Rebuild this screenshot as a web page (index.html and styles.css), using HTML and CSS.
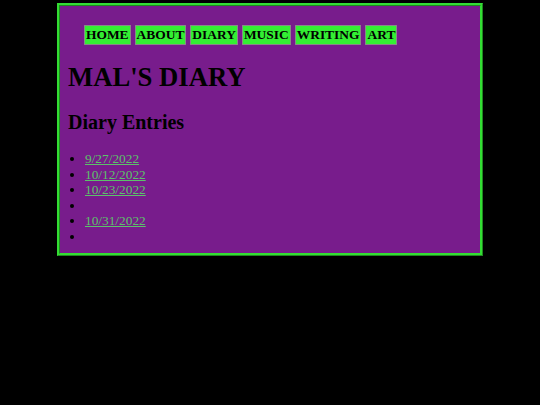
FILE: index.html
```html
<!DOCTYPE html>
<html>
<head>
<meta charset="utf-8">
<title>Mal's Diary</title>
<link rel="stylesheet" href="styles.css">
</head>
<body>
<div class="page">
  <nav class="nav">
    <a class="nav-item" href="#">HOME</a>
    <a class="nav-item" href="#">ABOUT</a>
    <a class="nav-item" href="#">DIARY</a>
    <a class="nav-item" href="#">MUSIC</a>
    <a class="nav-item" href="#">WRITING</a>
    <a class="nav-item" href="#">ART</a>
  </nav>
  <h1 class="title">MAL'S DIARY</h1>
  <h2 class="subtitle">Diary Entries</h2>
  <ul class="entries">
    <li><a href="#">9/27/2022</a></li>
    <li><a href="#">10/12/2022</a></li>
    <li><a href="#">10/23/2022</a></li>
    <li></li>
    <li><a href="#">10/31/2022</a></li>
    <li></li>
  </ul>
</div>
</body>
</html>
```
FILE: styles.css
```css
html, body {
  margin: 0;
  padding: 0;
  background: #000;
}
body {
  font-family: "Liberation Serif", "Times New Roman", serif;
  font-size: 13.33px;
  color: #000;
}
.page {
  margin: 3px auto 0;
  padding: 0 8px;
  box-sizing: border-box;
  width: 426px;
  background: #781c8c;
  border: 3px ridge #33dd33;
  display: flow-root;
}
.nav {
  display: flex;
  gap: 4px;
  padding: 19px 0 0 16px;
}
.nav-item {
  display: block;
  background: #33ee33;
  border: 1px solid #888;
  padding: 1px 1px;
  color: #000;
  font-weight: bold;
  font-size: 13.45px;
  text-decoration: none;
}
.title {
  font-size: 26.67px;
  margin: 17px 0 18px;
}
.subtitle {
  font-size: 20px;
  margin: 0 0 17px;
}
.entries {
  margin: 0 0 8px;
  padding-left: 17px;
}
.entries li {
  line-height: 15.6px;
}
.entries a {
  color: #5cc26a;
}
```
